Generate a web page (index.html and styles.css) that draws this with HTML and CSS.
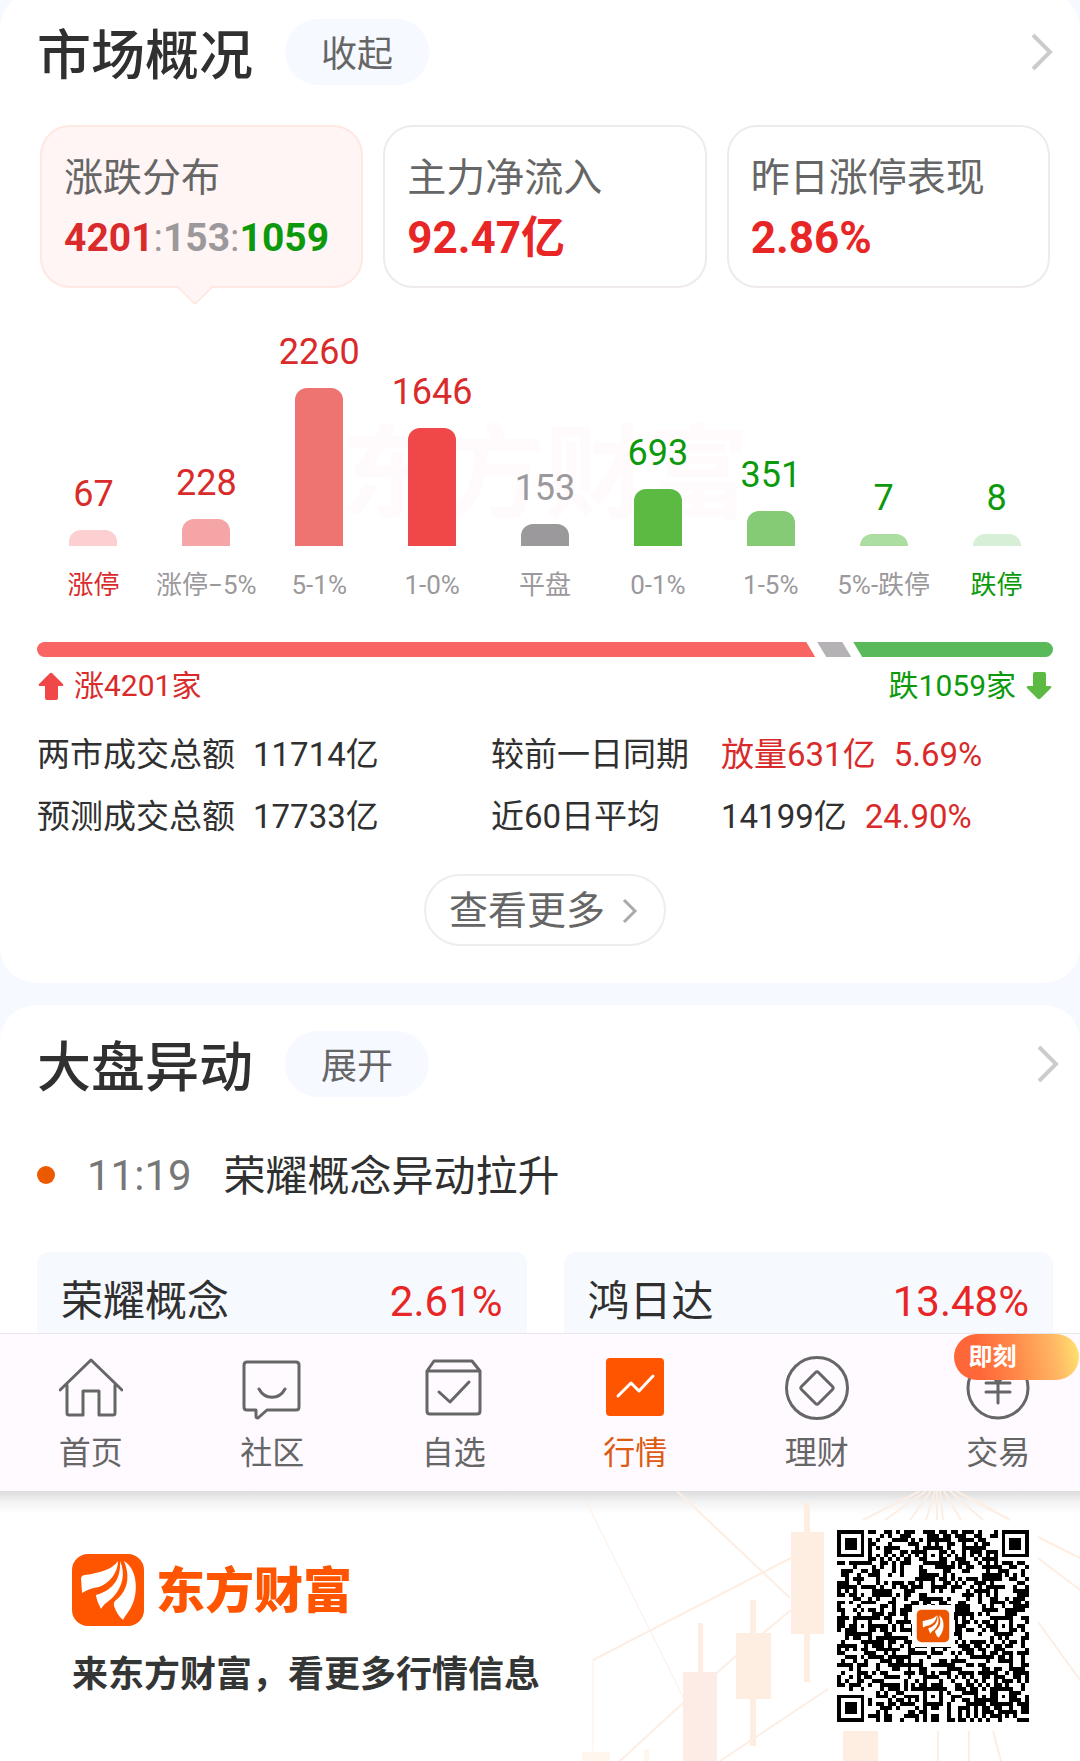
FILE: index.html
```html
<!DOCTYPE html>
<html lang="zh-CN">
<head>
    <meta charset="UTF-8">
    <meta name="viewport" content="width=device-width, initial-scale=1.0">
    <title>市场概况</title>
    <link rel="stylesheet" href="styles.css">
</head>
<body>
    <main>
        <section class="panel overview">
            <div class="panel-header">
                <h2>市场概况</h2>
                <button class="pill">收起</button>
                <a class="more-link" href="#" aria-label="市场概况详情">
                    <svg width="22" height="38" viewBox="0 0 22 38"><path d="M2 2l17 17L2 36"/></svg>
                </a>
            </div>

            <div class="tabs">
                <button class="tab active">
                    <span class="tab-label">涨跌分布</span>
                    <span class="tab-value small"><b class="up">4201</b><span class="flat">:<b>153</b>:</span><b class="down">1059</b></span>
                </button>
                <button class="tab">
                    <span class="tab-label">主力净流入</span>
                    <span class="tab-value up">92.47亿</span>
                </button>
                <button class="tab">
                    <span class="tab-label">昨日涨停表现</span>
                    <span class="tab-value up">2.86%</span>
                </button>
            </div>

            <div class="chart">
                <div class="watermark" aria-hidden="true">东方财富</div>
                <div class="col up"><span class="num">67</span><div class="bar limit-up" style="height: 16px"></div><span class="range on">涨停</span></div>
                <div class="col up"><span class="num">228</span><div class="bar up-high" style="height: 27px"></div><span class="range">涨停−5%</span></div>
                <div class="col up"><span class="num">2260</span><div class="bar up-mid" style="height: 158px"></div><span class="range">5-1%</span></div>
                <div class="col up"><span class="num">1646</span><div class="bar up-low" style="height: 118px"></div><span class="range">1-0%</span></div>
                <div class="col flat"><span class="num">153</span><div class="bar even" style="height: 22px"></div><span class="range">平盘</span></div>
                <div class="col down"><span class="num">693</span><div class="bar down-low" style="height: 57px"></div><span class="range">0-1%</span></div>
                <div class="col down"><span class="num">351</span><div class="bar down-mid" style="height: 35px"></div><span class="range">1-5%</span></div>
                <div class="col down"><span class="num">7</span><div class="bar down-high" style="height: 12px"></div><span class="range">5%-跌停</span></div>
                <div class="col down"><span class="num">8</span><div class="bar limit-down" style="height: 12px"></div><span class="range on">跌停</span></div>
            </div>

            <div class="ratio">
                <div class="ratio-up" style="width: 76.6%"></div>
                <div class="ratio-flat"></div>
                <div class="ratio-down"></div>
            </div>
            <div class="ratio-text">
                <span class="up">
                    <svg width="26" height="28" viewBox="0 0 26 28"><path fill="#f04848" d="M11.500 1.500q1.500-1.500 3 0L25 12q1 2-1 2h-4v12q0 2-2 2H9q-2 0-2-2V14H2q-2 0-1-2z"/></svg>
                    涨4201家
                </span>
                <span class="down">
                    跌1059家
                    <svg width="26" height="28" viewBox="0 0 26 28"><path fill="#5cba43" d="M11.500 26.500q1.500 1.500 3 0L25 16q1-2-1-2h-4V2q0-2-2-2H9Q7 0 7 2v12H2q-2 0-1 2z"/></svg>
                </span>
            </div>

            <div class="stats">
                <div class="stat"><span class="stat-name">两市成交总额</span><span>11714亿</span></div>
                <div class="stat wide"><span class="stat-name">较前一日同期</span><span class="up">放量631亿</span><span class="up">5.69%</span></div>
                <div class="stat"><span class="stat-name">预测成交总额</span><span>17733亿</span></div>
                <div class="stat wide"><span class="stat-name">近60日平均</span><span>14199亿</span><span class="up">24.90%</span></div>
            </div>

            <button class="view-more">
                查看更多
                <svg width="16" height="26" viewBox="0 0 16 26"><path d="M2 2l11 11L2 24"/></svg>
            </button>
        </section>

        <section class="panel moves">
            <div class="panel-header">
                <h2>大盘异动</h2>
                <button class="pill">展开</button>
                <a class="more-link" href="#" aria-label="大盘异动详情">
                    <svg width="22" height="38" viewBox="0 0 22 38"><path d="M2 2l17 17L2 36"/></svg>
                </a>
            </div>
            <div class="event">
                <span class="dot"></span>
                <time>11:19</time>
                <span>荣耀概念异动拉升</span>
            </div>
            <div class="cards">
                <a class="card" href="#"><span>荣耀概念</span><span class="rise">2.61%</span></a>
                <a class="card" href="#"><span>鸿日达</span><span class="rise">13.48%</span></a>
            </div>
        </section>
    </main>

    <nav class="tabbar">
        <ul>
            <li><a href="#">
                <svg viewBox="0 0 64 64"><path d="M1 34L32 4l31 30M8 29v28q0 2 2 2h14V35h16v24h14q2 0 2-2V29"/></svg>
                首页
            </a></li>
            <li><a href="#">
                <svg viewBox="0 0 64 64"><path d="M7 6h49q3 0 3 3v42q0 3-3 3H27l-9 8q-2 0-2-2v-6H7q-3 0-3-3V9q0-3 3-3zM19 33c6 11 20 11 26 0"/></svg>
                社区
            </a></li>
            <li><a href="#">
                <svg viewBox="0 0 64 64"><path d="M5 15l7-10h38l8 10v40q0 3-3 3H8q-3 0-3-3zM5 15h53M17 36l11 10 19-20"/></svg>
                自选
            </a></li>
            <li><a href="#" class="current">
                <svg viewBox="0 0 64 64"><rect x="3" y="2" width="58" height="58" rx="4" fill="#ff5500" stroke="none"/><path stroke="#fff" stroke-width="3" d="M15 40l13-13 8 8 14-15"/></svg>
                行情
            </a></li>
            <li><a href="#">
                <svg viewBox="0 0 64 64"><circle cx="32" cy="32" r="30.500"/><path d="M30.500 16.500q1.500-1.500 3 0l14 14q1.500 1.500 0 3l-14 14q-1.500 1.500-3 0l-14-14q-1.500-1.500 0-3z"/></svg>
                理财
            </a></li>
            <li><a href="#">
                <svg viewBox="0 0 64 64"><circle cx="32" cy="32" r="30"/><path d="M23 15l9 12 9-12M20 27h24M20 36h24M32 27v20"/></svg>
                交易
                <span class="badge">即刻</span>
            </a></li>
        </ul>
    </nav>

    <footer class="promo">
        <!-- candlestick backdrop -->
        <svg class="backdrop" width="520" height="270" viewBox="0 0 520 270" aria-hidden="true">
            <g stroke="#fdeee4" stroke-width="2" fill="none">
                <path d="M117 0l113 107M33 169L231 67M60 270l63-58 54-48 54-45M160 270l108-72"/>
                <path stroke-width="1" d="M27 12l96 194M33 169v91"/>
                <path d="M360 0l-57 29M366 0l-41 29M371 0l-21 29M375 0l-9 29M377 0v29M380 0l3 29M384 0l17 29M390 0l33 29M396 0l54 29M478 46l42 21M478 67l42 32M478 131l42 58M378 240v30M409 240v30M433 240l8 30"/>
            </g>
            <g fill="#feeee2">
                <path d="M244 12h6v179h-6zM231 41h33v102h-33zM190 109h6v146h-6zM176 142h35v66h-35zM138 132h5v60h-5zM283 240h35v30h-35z"/>
                <path fill="#fdece5" d="M123 181h34v89h-34z"/>
                <path fill="#fff6ee" d="M22 261h28v9H22zM84 258h5v12h-5z"/>
            </g>
        </svg>
        <div class="brand">
            <div class="brand-name">
                <svg width="72" height="72" viewBox="0 0 72 72">
                    <rect width="72" height="72" rx="16" fill="#ff5500"/>
                    <g id="feathers" fill="#fff">
                        <path d="M46 7C41 15 28 19 13 21q-3 0-4 3l1 15q8-5 17-6C38 29 46 18 46 7z"/>
                        <path d="M48 7c1 17-6 29-24 34q0 4 5 14c3-6 9-8 13-13 8-9 12-22 6-35z"/>
                        <path d="M52 7c7 17 3 31-9 40q-2 2-1 5 3 9 9 14c3-6 8-10 11-20 4-13 2-32-10-39z"/>
                    </g>
                </svg>
                <strong>东方财富</strong>
            </div>
            <p>来东方财富，看更多行情信息</p>
        </div>
        <div class="qr">
            <svg width="192" height="192" viewBox="0 0 49 49" shape-rendering="crispEdges" role="img" aria-label="二维码">
                <path id="qr-modules"/>
            </svg>
            <svg class="qr-logo" width="42" height="42" viewBox="-8 -8 88 88" aria-hidden="true">
                <rect x="-8" y="-8" width="88" height="88" fill="#fff"/>
                <rect x="2" y="2" width="68" height="68" rx="10" fill="#ee5500"/>
                <use href="#feathers" transform="translate(7 8) scale(.8)"/>
            </svg>
        </div>
    </footer>

    <script src="qr.js"></script>
</body>
</html>
```
FILE: styles.css
```css
* {
    margin: 0;
    padding: 0;
    box-sizing: border-box;
}
body {
    background: #f6f9ff;
    color: #303030;
    font-family: Roboto, "Noto Sans CJK SC", sans-serif;
    overflow-x: hidden;
}
a {
    color: inherit;
    text-decoration: none;
}
button {
    font: inherit;
    color: inherit;
    border: none;
    background: none;
    cursor: pointer;
}
svg {
    fill: none;
    flex-shrink: 0;
}
.up {
    color: #d92b2b;
}
.down {
    color: #0c9a0c;
}
.flat {
    color: #9c999c;
}

/* Panels */
main {
    overflow: hidden;
}
.panel {
    background: #fff;
    padding: 0 27px 0 37px;
}
.overview {
    margin-top: -8px;
    padding-top: 27px;
    padding-bottom: 37px;
    border-radius: 36px;
}
.moves {
    margin-top: 22px;
    padding-top: 26px;
    border-radius: 36px 36px 0 0;
}
.panel-header {
    display: flex;
    align-items: center;
    height: 66px;
}
h2 {
    padding-top: 10px;
    font-size: 54px;
    font-weight: 500;
    line-height: 66px;
}
.pill {
    width: 144px;
    height: 66px;
    margin-left: 32px;
    padding-top: 5px;
    border-radius: 33px;
    background: #f6f9ff;
    color: #666;
    font-size: 36px;
    line-height: 44px;
}
.more-link {
    display: flex;
    margin-left: auto;
}
.moves .more-link {
    margin-right: -6px;
}
.more-link path {
    stroke: #ccc;
    stroke-width: 4;
}

/* Summary tabs */
.tabs {
    display: grid;
    grid-template-columns: repeat(3, 1fr);
    gap: 20px;
    margin: 40px 3px 0;
}
.tab {
    position: relative;
    height: 163px;
    padding: 2px 0 0 22px;
    display: flex;
    flex-direction: column;
    justify-content: center;
    border: 2px solid #eeeaee;
    border-radius: 30px;
    text-align: left;
    white-space: nowrap;
}
.tab-label {
    color: #666;
    font-size: 39px;
    line-height: 60px;
}
.tab-value {
    font-size: 44px;
    font-weight: 700;
    line-height: 60px;
}
.tab-value.up {
    color: #e82626;
}
.tab-value.small {
    font-size: 39px;
    font-weight: 400;
}
.tab.active {
    background: #fff5f5;
    border-color: #fee8e1;
}
.tab.active::after {
    content: "";
    position: absolute;
    left: 139px;
    bottom: -14px;
    width: 26px;
    height: 26px;
    background: #fff5f5;
    border: solid #fee8e1;
    border-width: 0 2px 2px 0;
    border-radius: 0 0 4px;
    transform: rotate(45deg);
    clip-path: polygon(100% 0, 100% 100%, 0 100%);
}

/* Distribution chart */
.chart {
    position: relative;
    display: grid;
    grid-template-columns: repeat(9, 1fr);
    align-items: end;
    height: 290px;
    margin-top: 23px;
    z-index: 0;
}
.watermark {
    position: absolute;
    z-index: -1;
    top: 94px;
    left: 0;
    right: 0;
    color: #fffbfd;
    font-size: 102px;
    font-weight: 700;
    line-height: 140px;
    text-align: center;
}
.col {
    display: flex;
    flex-direction: column;
    align-items: center;
    white-space: nowrap;
}
.num {
    font-size: 36px;
    line-height: 40px;
    margin-bottom: 16px;
}
.bar {
    width: 48px;
    border-radius: 12px 12px 0 0;
}
.range {
    color: #9c999c;
    font-size: 26px;
    line-height: 32px;
    margin-top: 23px;
}
.range.on {
    color: inherit;
}
.limit-up { background: #fccfd1; }
.up-high { background: #f6a5a6; }
.up-mid { background: #ee7471; }
.up-low { background: #f04848; }
.even { background: #9c999c; }
.down-low { background: #5cba43; }
.down-mid { background: #85ca75; }
.down-high { background: #acdea1; }
.limit-down { background: #d7efd6; }

/* Advance / decline ratio */
.ratio {
    display: flex;
    gap: 2px;
    height: 15px;
    margin-top: 41px;
}
.ratio-up {
    background: #f86562;
    border-radius: 8px 0 0 8px;
    clip-path: polygon(0 0, calc(100% - 9px) 0, 100% 100%, 0 100%);
}
.ratio-flat {
    width: 34px;
    background: #b5b2b5;
    clip-path: polygon(0 0, calc(100% - 9px) 0, 100% 100%, 9px 100%);
}
.ratio-down {
    flex: 1;
    background: #5aba5a;
    border-radius: 0 8px 8px 0;
    clip-path: polygon(0 0, 100% 0, 100% 100%, 9px 100%);
}
.ratio-text {
    display: flex;
    justify-content: space-between;
    margin-top: 9px;
    padding: 0 1px;
    font-size: 30px;
    line-height: 40px;
}
.ratio-text span {
    display: flex;
    align-items: center;
    gap: 10px;
}

/* Turnover figures */
.stats {
    display: grid;
    grid-template-columns: 454fr 562fr;
    row-gap: 14px;
    margin-top: 25px;
    font-size: 33px;
    line-height: 48px;
    white-space: nowrap;
}
.stat {
    display: flex;
    gap: 18px;
}
.wide .stat-name {
    width: 212px;
}
.view-more {
    display: flex;
    align-items: center;
    justify-content: center;
    gap: 17px;
    width: 242px;
    height: 72px;
    margin: 33px auto 0;
    padding: 2px 3px 0 0;
    border: 2px solid #efecef;
    border-radius: 36px;
    color: #666;
    font-size: 39px;
    line-height: 48px;
    white-space: nowrap;
}
.view-more path {
    stroke: #aaa;
    stroke-width: 3;
}

/* Market moves */
.event {
    display: flex;
    align-items: center;
    height: 58px;
    margin-top: 49px;
    font-size: 42px;
    line-height: 60px;
}
.event span:last-child {
    padding-top: 4px;
}
.dot {
    width: 18px;
    height: 18px;
    border-radius: 50%;
    background: #ec5a00;
}
time {
    margin: 0 32px;
    padding-top: 2px;
    color: #777;
}
.cards {
    display: grid;
    grid-template-columns: 1fr 1fr;
    gap: 37px;
    margin-top: 48px;
}
.card {
    display: flex;
    justify-content: space-between;
    padding: 19px 24px 1px;
    border-radius: 12px 12px 0 0;
    background: #f6faff;
    font-size: 42px;
    line-height: 61px;
}
.rise {
    color: #e82626;
}

/* Bottom tab bar */
.tabbar {
    position: relative;
    z-index: 1;
    background: #fefaff;
    border-top: 1px solid #e9e7ea;
    overflow: hidden;
}
.tabbar ul {
    display: grid;
    grid-template-columns: repeat(6, 1fr);
    margin-right: -9px;
    list-style: none;
}
.tabbar a {
    position: relative;
    display: flex;
    flex-direction: column;
    align-items: center;
    height: 157px;
    padding-top: 22px;
    color: #666;
    font-size: 32px;
    line-height: 48px;
}
.tabbar svg {
    width: 64px;
    height: 64px;
    margin-bottom: 9px;
    stroke: #666;
    stroke-width: 3;
    stroke-linecap: round;
    stroke-linejoin: round;
}
.tabbar .current {
    color: #dd5a10;
}
.badge {
    position: absolute;
    top: 0;
    left: 46px;
    width: 125px;
    height: 46px;
    padding-left: 15px;
    border-radius: 23px;
    background: linear-gradient(80deg, #ff6638 20%, #ff8a4a 50%, #ffb865 80%, #ffe670);
    color: #fff;
    font-size: 24px;
    font-weight: 700;
    line-height: 46px;
}

/* Share footer */
.promo {
    position: relative;
    display: flex;
    justify-content: space-between;
    align-items: flex-start;
    padding: 30px 42px 30px 72px;
    background: linear-gradient(#dcdcdc, #f3f3f3 11px, #fff 23px);
    overflow: hidden;
}
.backdrop {
    position: absolute;
    top: 0;
    right: 0;
}
.brand {
    position: relative;
    margin-top: 33px;
}
.brand-name {
    display: flex;
    align-items: center;
    gap: 12px;
    color: #ff5500;
    font-size: 49px;
    line-height: 72px;
}
.brand-name strong {
    padding-top: 3px;
    font-weight: 900;
    line-height: 69px;
}
.brand p {
    margin-top: 31px;
    color: #343635;
    font-size: 36px;
    font-weight: 700;
    line-height: 36px;
}
.qr {
    position: relative;
    display: flex;
    padding: 9px;
    background: #fff;
}
.qr path {
    fill: #000;
}
.qr-logo {
    position: absolute;
    top: 84px;
    left: 84px;
}
.qr .qr-logo path {
    fill: #fff;
}
```
FILE: qr.js
```js
// Fills the 49 x 49 code module by module
const SIZE = 49;
let seed = 20241;

function nextBit() {
    seed = (seed * 1103515245 + 12345) % 2147483648;
    return seed / 2147483648 < 0.52;
}

// Square rings: finder patterns (radius 3) and alignment patterns (radius 2)
const finders = [[3, 3], [45, 3], [3, 45]];
const aligns = [[24, 6], [6, 24], [42, 24], [24, 42], [42, 42]];

function isDark(x, y) {
    const random = nextBit();
    for (const [cx, cy] of finders) {
        const d = Math.max(Math.abs(x - cx), Math.abs(y - cy));
        if (d <= 4) return d !== 2 && d !== 4;
    }
    for (const [cx, cy] of aligns) {
        const d = Math.max(Math.abs(x - cx), Math.abs(y - cy));
        if (d <= 2) return d !== 1;
    }
    if (x === 6 || y === 6) return (x + y) % 2 === 0;
    return random;
}

let d = '';
for (let y = 0; y < SIZE; y++) {
    for (let x = 0; x < SIZE; x++) {
        if (isDark(x, y)) d += `M${x} ${y}h1v1h-1z`;
    }
}
document.getElementById('qr-modules').setAttribute('d', d);
```
